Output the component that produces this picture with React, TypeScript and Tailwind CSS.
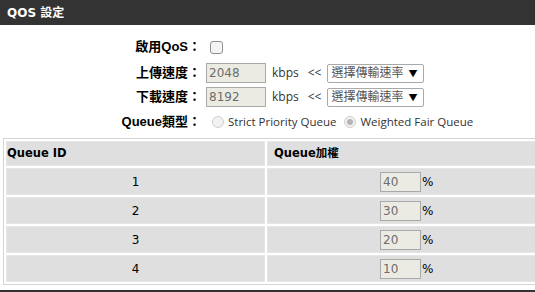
import React from "react";

const rows = [
  { id: 1, weight: "40" },
  { id: 2, weight: "30" },
  { id: 3, weight: "20" },
  { id: 4, weight: "10" },
];

const labelFont = "font-['Liberation_Sans','Noto_Sans_CJK_TC',sans-serif]";
const bodyFont = "font-['Open_Sans','Noto_Sans_CJK_TC',sans-serif]";
const tahoma = "font-['DejaVu_Sans','Noto_Sans_CJK_TC',sans-serif]";

function RateSelect() {
  return (
    <div className="ml-[6px] flex h-[19px] w-[97px] items-center justify-between rounded-[2px] border border-[#a9a9a9] bg-white pl-[3px] pr-[6px]">
      <span className="text-[12px] text-[#555]">選擇傳輸速率</span>
      <span className="text-[9px] leading-none text-black">▼</span>
    </div>
  );
}

function NumBox({ value, width }: { value: string; width: string }) {
  return (
    <div
      className={`flex h-[20px] items-center border border-[#a9a9a9] bg-[#ebebe4] pl-[2px] text-[12px] text-[#6d6d6d] ${tahoma} ${width}`}
    >
      {value}
    </div>
  );
}

function Radio({ checked }: { checked?: boolean }) {
  return (
    <span className="mx-[4px] flex h-[12px] w-[12px] items-center justify-center rounded-full border border-[#cfcfcf] bg-[#f2f2f2]">
      {checked && <span className="h-[6px] w-[6px] rounded-full bg-[#b5b5b5]" />}
    </span>
  );
}

export default function App() {
  return (
    <div className="relative h-[292px] w-[535px] overflow-hidden bg-white">
      <div className={`flex h-[25px] items-center bg-[#333333] pl-[7px] text-[12px] font-bold text-white ${tahoma}`}>
        QOS 設定
      </div>

      <div className={`mt-[10px] ${bodyFont} text-[12px] text-[#333]`}>
        <div className="flex h-[24px] items-center">
          <div className={`w-[201px] text-right text-[13px] font-bold text-black ${labelFont}`}>啟用QoS：</div>
          <span className="ml-[9px] h-[13px] w-[13px] rounded-[3px] border border-[#8f8f8f] bg-[#f4f4f4]" />
        </div>
        <div className="mt-[2px] flex h-[24px] items-center">
          <div className={`w-[201px] text-right text-[13px] font-bold text-black ${labelFont}`}>上傳速度：</div>
          <div className="ml-[5px]">
            <NumBox value="2048" width="w-[60px]" />
          </div>
          <span className="ml-[6px]">kbps</span>
          <span className="ml-[9px]">&lt;&lt;</span>
          <RateSelect />
        </div>
        <div className="flex h-[24px] items-center">
          <div className={`w-[201px] text-right text-[13px] font-bold text-black ${labelFont}`}>下載速度：</div>
          <div className="ml-[5px]">
            <NumBox value="8192" width="w-[60px]" />
          </div>
          <span className="ml-[6px]">kbps</span>
          <span className="ml-[9px]">&lt;&lt;</span>
          <RateSelect />
        </div>
        <div className="mt-[1px] flex h-[24px] items-center text-[11.5px]">
          <div className={`w-[201px] text-right text-[13px] font-bold text-black ${labelFont}`}>Queue類型：</div>
          <span className="ml-[7px]" />
          <Radio />
          <span>Strict Priority Queue</span>
          <span className="ml-[4px]" />
          <Radio checked />
          <span>Weighted Fair Queue</span>
        </div>
      </div>

      <table
        className={`ml-[3px] mt-[4px] w-[545px] border-separate border-spacing-[2px] border border-[#d4d4d4] text-[12px] text-black ${tahoma}`}
      >
        <thead>
          <tr className="h-[25px]">
            <th className="w-[259px] border border-[#e6e6e6] bg-[#dfdfdf] pl-0 text-left text-[11.5px] font-bold">Queue ID</th>
            <th className="border border-[#e6e6e6] bg-[#dfdfdf] pl-[6px] text-left text-[11.5px] font-bold">Queue加權</th>
          </tr>
        </thead>
        <tbody>
          {rows.map((r) => (
            <tr key={r.id} className="h-[27px]">
              <td className="border border-[#e6e6e6] bg-[#dfdfdf] text-center">{r.id}</td>
              <td className="border border-[#e6e6e6] bg-[#dfdfdf]">
                <div className="flex items-center justify-center">
                  <NumBox value={r.weight} width="w-[41px]" />
                  <span className="ml-[1px] w-[10px]">%</span>
                </div>
              </td>
            </tr>
          ))}
        </tbody>
      </table>

      <div className="absolute bottom-0 left-0 h-[2px] w-full bg-[#333333]" />
    </div>
  );
}
